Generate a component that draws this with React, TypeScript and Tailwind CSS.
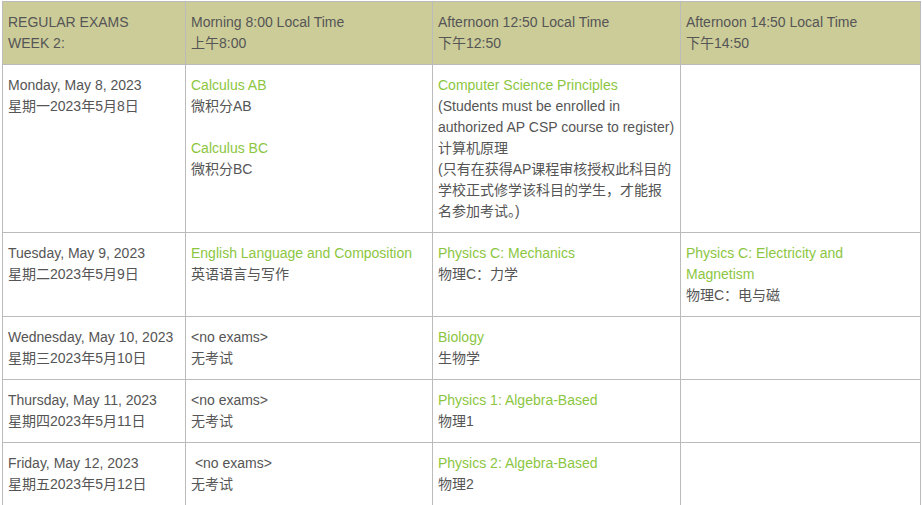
type Exam = { en: string[]; zh: string[] };

type Row = {
  en: string;
  zh: string;
  cells: (Exam[] | "none" | "none-sp" | null)[];
};

const rows: Row[] = [
  {
    en: "Monday, May 8, 2023",
    zh: "星期一2023年5月8日",
    cells: [
      [
        { en: ["Calculus AB"], zh: ["微积分AB"] },
        { en: ["Calculus BC"], zh: ["微积分BC"] },
      ],
      [
        {
          en: ["Computer Science Principles"],
          zh: [
            "(Students must be enrolled in",
            "authorized AP CSP course to register)",
            "计算机原理",
            "(只有在获得AP课程审核授权此科目的",
            "学校正式修学该科目的学生，才能报",
            "名参加考试。)",
          ],
        },
      ],
      null,
    ],
  },
  {
    en: "Tuesday, May 9, 2023",
    zh: "星期二2023年5月9日",
    cells: [
      [{ en: ["English Language and Composition"], zh: ["英语语言与写作"] }],
      [{ en: ["Physics C: Mechanics"], zh: ["物理C：力学"] }],
      [{ en: ["Physics C: Electricity and", "Magnetism"], zh: ["物理C：电与磁"] }],
    ],
  },
  {
    en: "Wednesday, May 10, 2023",
    zh: "星期三2023年5月10日",
    cells: ["none", [{ en: ["Biology"], zh: ["生物学"] }], null],
  },
  {
    en: "Thursday, May 11, 2023",
    zh: "星期四2023年5月11日",
    cells: ["none", [{ en: ["Physics 1: Algebra-Based"], zh: ["物理1"] }], null],
  },
  {
    en: "Friday, May 12, 2023",
    zh: "星期五2023年5月12日",
    cells: ["none-sp", [{ en: ["Physics 2: Algebra-Based"], zh: ["物理2"] }], null],
  },
];

const td = "border border-[#bbbbbb] px-[5px] pt-[10px] pb-[10px] align-top";

function Cell({ c }: { c: Row["cells"][number] }) {
  if (c === null) return <td className={td} />;
  if (c === "none" || c === "none-sp")
    return (
      <td className={td}>
        <div className="whitespace-pre">{c === "none-sp" ? " <no exams>" : "<no exams>"}</div>
        <div>无考试</div>
      </td>
    );
  return (
    <td className={td}>
      {c.map((e, i) => (
        <div key={i} className={i > 0 ? "mt-[21px]" : ""}>
          {e.en.map((l) => (
            <div key={l} className="whitespace-nowrap text-[#8cc63f]">
              {l}
            </div>
          ))}
          {e.zh.map((l) => (
            <div key={l} className="whitespace-nowrap">
              {l}
            </div>
          ))}
        </div>
      ))}
    </td>
  );
}

export default function App() {
  return (
    <div className="h-[505px] w-[922px] overflow-hidden bg-white pl-[2px] pt-[1px] font-['Liberation_Sans','Noto_Sans_CJK_SC',sans-serif] text-[14px] leading-[21px] text-[#555555]">
      <table className="w-[918px] table-fixed border-collapse">
        <colgroup>
          <col className="w-[183px]" />
          <col className="w-[247px]" />
          <col className="w-[248px]" />
          <col className="w-[240px]" />
        </colgroup>
        <thead>
          <tr className="bg-[#cccc99] text-left font-normal">
            <th className={td + " pt-[9px] font-normal"}>
              REGULAR EXAMS
              <br />
              WEEK 2:
            </th>
            <th className={td + " pt-[9px] font-normal"}>
              Morning 8:00 Local Time
              <br />
              上午8:00
            </th>
            <th className={td + " pt-[9px] font-normal"}>
              Afternoon 12:50 Local Time
              <br />
              下午12:50
            </th>
            <th className={td + " pt-[9px] font-normal"}>
              Afternoon 14:50 Local Time
              <br />
              下午14:50
            </th>
          </tr>
        </thead>
        <tbody>
          {rows.map((r) => (
            <tr key={r.en}>
              <td className={td}>
                <div>{r.en}</div>
                <div>{r.zh}</div>
              </td>
              {r.cells.map((c, i) => (
                <Cell key={i} c={c} />
              ))}
            </tr>
          ))}
        </tbody>
      </table>
    </div>
  );
}
